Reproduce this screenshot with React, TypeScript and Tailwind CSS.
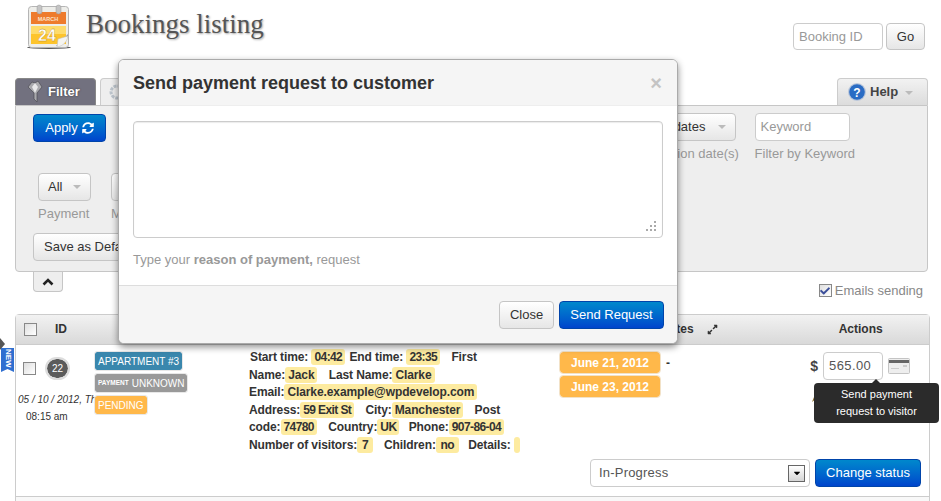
import { FaSyncAlt, FaExpandAlt, FaCheck, FaCaretDown } from 'react-icons/fa';

const BLUE_BTN = 'bg-gradient-to-b from-[#0088cc] to-[#0044cc] border border-[#0044aa] rounded-[4px] text-white';
const WHITE_BTN = 'bg-gradient-to-b from-white to-[#e6e6e6] border border-[#c5c5c5] rounded-[4px] text-[#333]';

function CalendarIcon() {
  return (
    <svg width="46" height="46" viewBox="0 0 46 46">
      <ellipse cx="23" cy="44.5" rx="22" ry="1.5" fill="#555" />
      <rect x="2.5" y="3.5" width="40" height="41" rx="3" fill="#eeeeea" stroke="#b5b5b5" />
      <rect x="5" y="9" width="35" height="12" fill="#ee7b2c" />
      <rect x="5" y="23" width="35" height="18" fill="#fdc42c" />
      <rect x="5" y="23" width="35" height="8" fill="#fedb6a" />
      <rect x="11" y="2" width="5" height="9" rx="2.5" fill="#c4c4c4" stroke="#999" strokeWidth="0.5" />
      <rect x="30" y="2" width="5" height="9" rx="2.5" fill="#c4c4c4" stroke="#999" strokeWidth="0.5" />
      <text x="22" y="18" fontSize="5.5" fontWeight="700" fill="#fbe2c8" textAnchor="middle" fontFamily="Liberation Sans">MARCH</text>
      <text x="21" y="38" fontSize="16" fontWeight="700" fill="#fff" stroke="#b98a1a" strokeWidth="0.3" textAnchor="middle" fontFamily="Liberation Sans">24</text>
      <path d="M30 43l12-12v3l-9 9z" fill="#999" />
      <path d="M31 44c6-1 10-5 11-11l-10 3z" fill="#f4f4f0" stroke="#bbb" strokeWidth="0.5" />
    </svg>
  );
}

function FunnelIcon() {
  return (
    <svg width="16" height="24" viewBox="0 0 16 24">
      <path d="M1 7l4-5 3 1 3-2 4 6-5 6v9l-3-3v-6z" fill="#a9a9ad" stroke="#4c4c53" strokeWidth="0.7" />
      <path d="M8 3l3 4-3 6-3-6z" fill="#e9e9ea" />
    </svg>
  );
}

function GearIcon() {
  return (
    <svg width="16" height="16" viewBox="0 0 16 16">
      <circle cx="8" cy="8" r="6" fill="none" stroke="#bcc4cc" strokeWidth="3" strokeDasharray="3 1" />
    </svg>
  );
}

function HelpIcon() {
  return (
    <svg width="18" height="18" viewBox="0 0 18 18">
      <circle cx="9" cy="9" r="9" fill="#b9c6da" />
      <circle cx="9" cy="9" r="7.8" fill="#2a6cc4" />
      <text x="9" y="13.5" fontSize="12" fontWeight="700" fill="#fff" textAnchor="middle" fontFamily="Liberation Sans">?</text>
    </svg>
  );
}

function CardIcon() {
  return (
    <svg width="22" height="16" viewBox="0 0 22 16">
      <rect x="0.5" y="0.5" width="21" height="15" rx="1" fill="#eeeeee" stroke="#c4c4c4" />
      <rect x="1" y="2" width="20" height="3" fill="#666" />
      <rect x="3" y="10" width="8" height="1" fill="#ccc" />
      <rect x="15" y="7" width="4" height="2" fill="#ccc" />
    </svg>
  );
}

function Caret() {
  return <span className="inline-block border-x-[4px] border-x-transparent border-t-[4px] border-t-[#bbb]" />;
}

function SelectBtn({ text, className }: { text: string; className: string }) {
  return (
    <div className={`h-[28px] flex items-center justify-between px-[9px] text-[13px] ${WHITE_BTN} ${className}`}>
      <span>{text}</span>
      <Caret />
    </div>
  );
}

function FieldLabel({ text }: { text: string }) {
  return <div className="mt-[3px] text-[13px] leading-[20px] text-[#999] whitespace-nowrap">{text}</div>;
}

function Check({ checked }: { checked?: boolean }) {
  return (
    <span className="w-[13px] h-[13px] border border-[#888] bg-gradient-to-br from-[#dfdfdf] to-white flex items-center justify-center shrink-0">
      {checked && <FaCheck className="text-[#3b4f9a] w-[10px] h-[10px]" />}
    </span>
  );
}

function Val({ tight, children }: { tight?: boolean; children?: React.ReactNode }) {
  return (
    <span className={`bg-[#fdeba0] rounded-[3px] px-[3px] py-[1px] font-bold text-[#333] ${tight ? 'tracking-[-0.6px]' : ''}`}>
      {children}
    </span>
  );
}

function Tag({ className, children }: { className: string; children: React.ReactNode }) {
  return (
    <div className={`w-fit h-[18px] px-[3px] flex items-center gap-[3px] rounded-[2px] text-white text-[10px] whitespace-nowrap outline outline-1 outline-[#e8e8e8] ${className}`}>
      {children}
    </div>
  );
}

function DateTag({ text }: { text: string }) {
  return (
    <div className="w-[100px] h-[21px] flex items-center justify-center rounded-[3px] bg-[#ffb84a] text-white font-bold text-[12px] outline outline-1 outline-[#f2e2c8]">
      {text}
    </div>
  );
}

function ActionIcons() {
  return (
    <svg width="92" height="16" viewBox="0 0 92 16">
      <path d="M1 14l2-5 7-7 2 2-7 7z" fill="#8a6d2a" />
      <path d="M14 5h12v10H14z" fill="#a88d2c" />
      <circle cx="40" cy="8" r="6" fill="#4b6b8a" />
      <circle cx="58" cy="8" r="6" fill="#2f8f2f" />
      <path d="M68 3l10 10M78 3L68 13" stroke="#8a2020" strokeWidth="3" />
      <circle cx="88" cy="8" r="4" fill="#4b6b8a" />
    </svg>
  );
}

function Modal() {
  return (
    <div className="absolute left-[118px] top-[59px] w-[560px] h-[285px] bg-white border border-[#aaa] rounded-[6px] shadow-[0_3px_7px_rgba(0,0,0,0.45)] flex flex-col overflow-hidden z-10">
      <div className="h-[46px] shrink-0 bg-[#f5f5f5] border-b border-[#eee] flex items-center justify-between pl-[14px] pr-[15px] pt-[1px]">
        <span className="text-[18px] font-bold text-[#333]">Send payment request to customer</span>
        <span className="text-[20px] font-bold text-[#c4c4c4] leading-none">×</span>
      </div>
      <div className="flex-1 pt-[15px] px-[14px]">
        <div className="relative h-[117px] w-[530px] border border-[#ccc] rounded-[4px] shadow-[inset_0_1px_1px_rgba(0,0,0,0.08)]">
          <svg className="absolute right-[6px] bottom-[6px]" width="11" height="11" viewBox="0 0 11 11">
            <path d="M9 1h2v2H9zM5 5h2v2H5zM9 5h2v2H9zM1 9h2v2H1zM5 9h2v2H5zM9 9h2v2H9z" fill="#aaa" />
          </svg>
        </div>
        <div className="mt-[13px] text-[13px] leading-[18px] text-[#999]">
          Type your <b>reason of payment,</b> request
        </div>
      </div>
      <div className="h-[58px] shrink-0 bg-[#f5f5f5] border-t border-[#ddd] flex items-center justify-end gap-[5px] pr-[13px]">
        <div className={`w-[55px] h-[28px] flex items-center justify-center text-[13px] ${WHITE_BTN}`}>Close</div>
        <div className={`w-[105px] h-[28px] flex items-center justify-center text-[13px] ${BLUE_BTN}`}>Send Request</div>
      </div>
    </div>
  );
}

export default function App() {
  return (
    <div className="relative w-[941px] h-[501px] overflow-hidden bg-white font-['Liberation_Sans',Arial,sans-serif] text-[#333]">
      {/* Header */}
      <header className="h-[78px] flex items-start pr-[16px]">
        <div className="ml-[26px] mt-[3px]"><CalendarIcon /></div>
        <h1 className="ml-[14px] mt-[7px] font-['Liberation_Serif',Georgia,serif] text-[27px] leading-[34px] text-[#555] [text-shadow:1px_1px_2px_rgba(0,0,0,0.35)]">Bookings listing</h1>
        <div className="ml-auto mt-[23px] flex gap-[3px]">
          <div className="w-[90px] h-[27px] border border-[#ccc] rounded-[4px] flex items-center px-[5px] text-[13px] text-[#999]">Booking ID</div>
          <div className={`w-[39px] h-[27px] flex items-center justify-center text-[13px] ${WHITE_BTN}`}>Go</div>
        </div>
      </header>

      {/* Tabs */}
      <div className="ml-[15px] w-[913px] h-[27px] flex items-end">
        <div className="w-[81px] h-[27px] rounded-t-[4px] bg-[#72717f] border border-[#888] border-b-0 flex items-center pl-[11px] gap-[5px] text-white text-[13px] font-bold [text-shadow:0_0_2px_#333]">
          <FunnelIcon />Filter
        </div>
        <div className="ml-[4px] w-[30px] h-[27px] rounded-t-[4px] bg-[#eee] border border-[#ccc] border-b-0 flex items-center pl-[8px]">
          <GearIcon />
        </div>
        <div className="ml-auto w-[91px] h-[27px] rounded-t-[4px] bg-gradient-to-b from-[#f2f2f2] to-[#dcdcdc] border border-[#ccc] border-b-0 flex items-center pl-[10px] gap-[4px] text-[#444] text-[13px] font-bold">
          <HelpIcon />Help<span className="ml-[3px] -mt-[2px]"><Caret /></span>
        </div>
      </div>

      {/* Filter panel */}
      <section className="ml-[15px] w-[913px] h-[167px] bg-[#eeeeee] border border-[#c6c6c6] rounded-b-[4px] pl-[17px] pt-[8px]">
        <div className="flex h-[59px]">
          <div className={`w-[73px] h-[28px] flex items-center justify-center gap-[4px] text-[13px] ${BLUE_BTN}`}>
            Apply <FaSyncAlt className="w-[12px] h-[12px]" />
          </div>
          <div className="ml-auto -mt-[1px]">
            <SelectBtn text="All dates" className="w-[90px] ml-auto mr-[4px]" />
            <FieldLabel text="Creation date(s)" />
          </div>
          <div className="ml-[15px] mr-[72px] -mt-[1px]">
            <div className="w-[95px] h-[28px] bg-white border border-[#ccc] rounded-[4px] flex items-center px-[5px] text-[13px] text-[#999]">Keyword</div>
            <FieldLabel text="Filter by Keyword" />
          </div>
        </div>
        <div className="flex gap-[20px] pl-[5px] h-[60px]">
          <div>
            <SelectBtn text="All" className="w-[53px]" />
            <FieldLabel text="Payment" />
          </div>
          <div>
            <SelectBtn text="All" className="w-[60px]" />
            <FieldLabel text="Modification" />
          </div>
        </div>
        <div className={`w-[130px] h-[28px] flex items-center px-[10px] text-[13px] whitespace-nowrap ${WHITE_BTN}`}>Save as Default</div>
      </section>

      {/* Collapse + emails */}
      <div className="h-[42px] ml-[15px] w-[908px] flex items-start justify-between">
        <div className="ml-[18px] w-[30px] h-[20px] bg-[#eeeeee] border border-t-0 border-[#c6c6c6] rounded-b-[4px] flex items-center justify-center">
          <svg width="12" height="8" viewBox="0 0 12 8">
            <path d="M1.5 6.500L6 2l4.500 4.500" fill="none" stroke="#222" strokeWidth="2.6" />
          </svg>
        </div>
        <div className="mt-[9px] flex items-center gap-[3px] text-[13px] text-[#888]">
          <Check checked />Emails sending
        </div>
      </div>

      {/* Table */}
      <section className="ml-[15px] w-[915px] border border-[#ccc] rounded-t-[4px]">
        <div className="h-[30px] pb-[1px] bg-gradient-to-b from-[#f2f2f2] to-[#d9d9d9] border-b border-[#ccc] flex items-center text-[12px] font-bold">
          <span className="ml-[8px]"><Check /></span>
          <span className="ml-[18px]">ID</span>
          <span className="ml-[594px]">Dates</span>
          <FaExpandAlt className="ml-[13px] w-[11px] h-[11px]" />
          <span className="ml-[121px]">Actions</span>
        </div>
        <div className="relative h-[151px] flex">
          {/* ID + date */}
          <div className="w-[79px] shrink-0 pl-[7px] pt-[14px]">
            <div className="flex items-center gap-[11px]">
              <Check />
              <span className="w-[21px] h-[19px] rounded-full bg-[#5b5b5b] outline outline-2 outline-[#ddd] text-white text-[10px] flex items-center justify-center">22</span>
            </div>
            <div className="mt-[15px] -ml-[5px] text-[10px] italic leading-[14px] whitespace-nowrap">05 / 10 / 2012, Thu</div>
            <div className="mt-[3px] pl-[3px] text-[10px] leading-[14px]">08:15 am</div>
          </div>
          {/* Labels */}
          <div className="relative z-[1] w-[154px] shrink-0 pt-[7px] flex flex-col gap-[4px]">
            <Tag className="bg-[#3a87ad]">APPARTMENT #3</Tag>
            <Tag className="bg-[#999]"><span className="text-[6.5px] font-bold">PAYMENT</span>UNKNOWN</Tag>
            <Tag className="bg-[#ffb84a]">PENDING</Tag>
          </div>
          {/* Details */}
          <div className="w-[311px] shrink-0 pt-[4px] text-[12px] leading-[17.6px] font-bold text-[#333] pr-[30px] tracking-[-0.1px]">
            <span className="ml-[1px]">Start time:</span> <Val tight>04:42</Val> <span className="ml-[1px]">End time:</span> <Val tight>23:35</Val> <span className="ml-[8px]">First</span> Name:<Val>Jack</Val> <span className="ml-[8px]">Last Name:</span><Val>Clarke</Val> Email:<Val>Clarke.example@wpdevelop.com</Val> Address:<Val tight>59 Exit St</Val> <span className="ml-[8px]">City:</span><Val>Manchester</Val> <span className="ml-[8px]">Post</span> code:<Val tight>74780</Val> <span className="ml-[8px]">Country:</span><Val tight>UK</Val> <span className="ml-[6px]">Phone:</span><Val tight>907-86-04</Val> Number of visitors:<Val tight>&thinsp;7&thinsp;</Val> <span className="ml-[8px]">Children:</span><Val tight>&thinsp;no&thinsp;</Val> <span className="ml-[6px]">Details:</span> <span className="ml-[3px]"><Val /></span>
          </div>
          {/* Dates + actions */}
          <div className="flex-1 relative pr-[8px] pt-[7px] flex flex-col">
            <div className="flex justify-between">
              <div className="flex flex-col gap-[3px]">
                <div className="flex items-center gap-[6px]"><DateTag text="June 21, 2012" /><b className="text-[12px]">-</b></div>
                <DateTag text="June 23, 2012" />
              </div>
              <div className="flex flex-col items-end pr-[11px]">
                <div className="flex items-center gap-[5px]">
                  <b className="text-[14px] text-[#444]">$</b>
                  <div className="w-[60px] h-[28px] border border-[#ccc] rounded-[4px] flex items-center px-[5px] text-[13px] tracking-[0.4px] text-[#555]">565.00</div>
                  <CardIcon />
                </div>
                <div className="mt-[8px] mr-[7px]"><ActionIcons /></div>
              </div>
            </div>
            <div className="mt-auto mb-[9px] flex items-center justify-end gap-[5px]">
              <div className="w-[220px] h-[28px] bg-white border border-[#ccc] rounded-[4px] flex items-center justify-between pl-[8px] pr-[4px] text-[13px] tracking-[0.2px] text-[#555]">
                In-Progress
                <span className="w-[17px] h-[17px] border border-[#666] bg-gradient-to-b from-white to-[#d5d5d5] flex items-center justify-center">
                  <FaCaretDown className="w-[10px] h-[10px] text-black" />
                </span>
              </div>
              <div className={`w-[106px] h-[28px] flex items-center justify-center text-[13px] ${BLUE_BTN}`}>Change status</div>
            </div>
            {/* Tooltip */}
            <div className="absolute right-[-10px] top-[38px] w-[125px] h-[40px] rounded-[4px] bg-[#2b2b2b] text-white text-[11px] leading-[17px] text-center pt-[3px]">
              <span className="absolute -top-[4px] left-[57px] border-x-[5px] border-x-transparent border-b-[5px] border-b-[#2b2b2b]" />
              Send payment<br />request to visitor
            </div>
          </div>
        </div>
        <div className="h-[10px] border-t border-[#ccc] bg-[#f8f8f8]" />
      </section>

      {/* NEW ribbon */}
      <div className="absolute left-0 top-[338px] w-[14px] flex flex-col items-start">
        <span className="w-0 h-0 border-l-[5px] border-l-[#555] border-y-[6px] border-y-transparent" />
        <span className="ml-[1px] -mt-[2px] w-[13px] h-[24px] pb-[3px] bg-[#2f6fd0] text-white text-[8px] font-bold flex items-center justify-center [writing-mode:vertical-rl] [clip-path:polygon(0_0,100%_0,100%_100%,50%_88%,0_100%)]">NEW</span>
      </div>

      <Modal />
    </div>
  );
}
